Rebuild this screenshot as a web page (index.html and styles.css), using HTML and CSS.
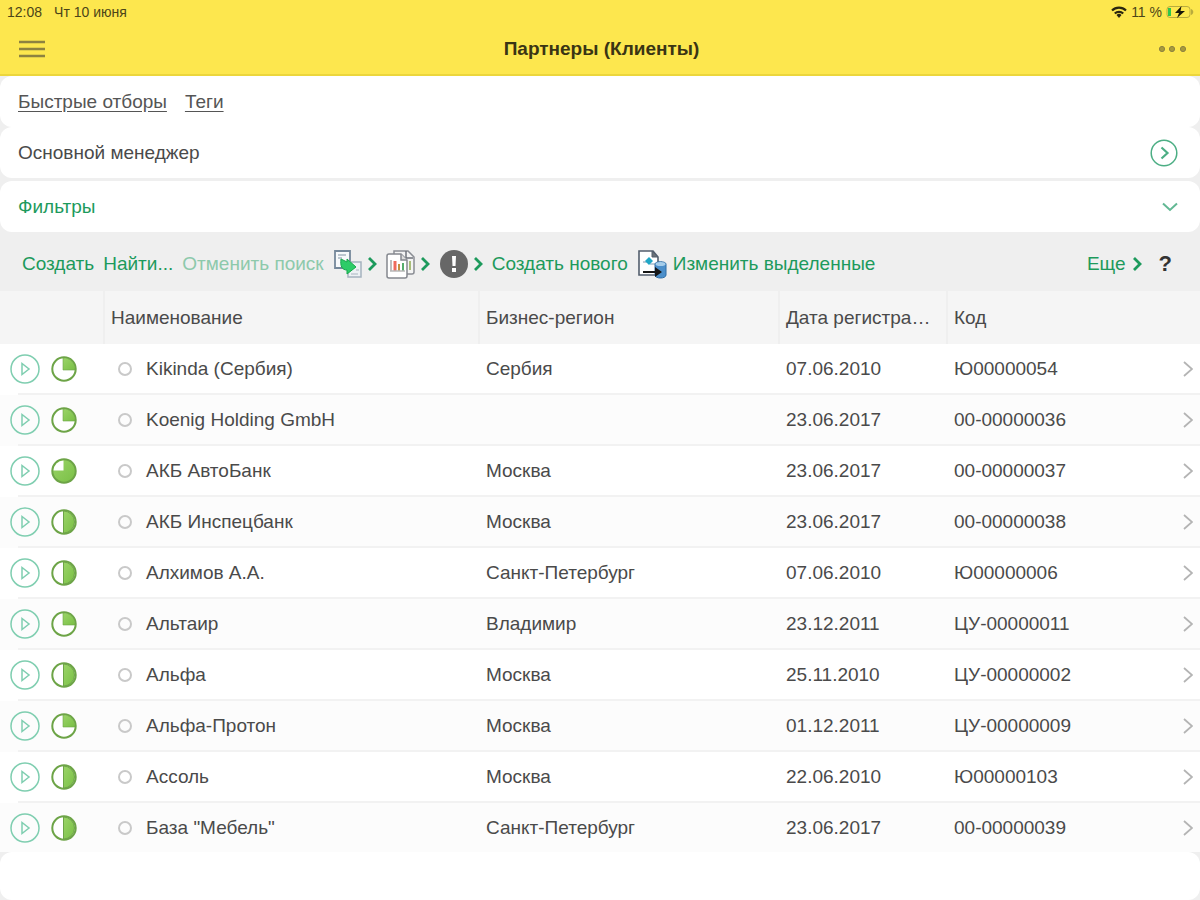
FILE: index.html
```html
<!DOCTYPE html>
<html lang="ru">
<head>
  <meta charset="UTF-8">
  <meta name="viewport" content="width=device-width, initial-scale=1.0">
  <title>Партнеры (Клиенты)</title>
  <link rel="stylesheet" href="styles.css">
</head>
<body>
  <svg class="sprite" aria-hidden="true">
    <symbol id="play" viewBox="0 0 30 30">
      <circle cx="15" cy="15" r="14" fill="none" stroke="#7fceb0" stroke-width="1.5"/>
      <path d="M12 9.5v11l7-5.5z" fill="none" stroke="#7fceb0" stroke-width="1.5"/>
    </symbol>
    <symbol id="pie25" viewBox="0 0 26 26">
      <circle cx="13" cy="13" r="11.7" fill="#fff" stroke="#6da447" stroke-width="2"/>
      <path d="M12 2a11 11 0 0 1 12 12H12z" fill="url(#green)" stroke="#6da447" stroke-width=".6"/>
    </symbol>
    <symbol id="pie50" viewBox="0 0 26 26">
      <circle cx="13" cy="13" r="11.7" fill="#fff" stroke="#6da447" stroke-width="2"/>
      <path d="M12.5 2a11 11 0 0 1 0 22z" fill="url(#green)" stroke="#6da447"/>
    </symbol>
    <symbol id="pie75" viewBox="0 0 26 26">
      <circle cx="13" cy="13" r="11.7" fill="url(#green)" stroke="#6da447" stroke-width="2"/>
      <path d="M12.5 2.5a10.5 10.5 0 0 0-10 10h10z" fill="#fff"/>
    </symbol>
    <symbol id="next" viewBox="0 0 10 16">
      <path d="M2 2l6 6-6 6" fill="none" stroke="currentColor" stroke-width="2.8"/>
    </symbol>
    <symbol id="go" viewBox="0 0 10 16">
      <path d="M1 1l8 7-8 7" fill="none" stroke="#b4b4b4" stroke-width="1.8"/>
    </symbol>
    <defs>
      <linearGradient id="green" x1="0" y1="0" x2="1" y2="1">
        <stop offset="0" stop-color="#9bd468"/>
        <stop offset="1" stop-color="#79bf45"/>
      </linearGradient>
    </defs>
  </svg>

  <header class="top">
    <div class="status">
      <span>12:08</span>
      <span class="date">Чт 10 июня</span>
      <svg class="wifi" width="16" height="12" viewBox="0 0 16 12">
        <path d="M1 4.5a10 10 0 0 1 14 0M3.8 7.5a6 6 0 0 1 8.4 0" fill="none" stroke="#29260f" stroke-width="2.2"/>
        <path d="M5.5 9a3.7 3.7 0 0 1 5 0L8 12z" fill="#29260f"/>
      </svg>
      <span class="percent">11 %</span>
      <svg width="28" height="14" viewBox="0 0 28 14">
        <rect x="1" y="1.5" width="23" height="11" rx="3" fill="none" stroke="#b9ab3d"/>
        <path d="M25 4c3 1 3 5 0 6z" fill="#b9ab3d"/>
        <rect x="2" y="3" width="3" height="8" fill="#2fc64b"/>
        <path d="M15.5 1L9 8h4l-2 5 8-7h-4.5z" fill="#17150a"/>
      </svg>
    </div>
    <div class="nav">
      <button class="icon-btn" aria-label="Меню">
        <svg width="26" height="18" viewBox="0 0 26 18">
          <path d="M0 2h26M0 9h26M0 16h26" stroke="#8d8240" stroke-width="2.5"/>
        </svg>
      </button>
      <h1>Партнеры (Клиенты)</h1>
      <button class="icon-btn" aria-label="Действия">
        <svg width="30" height="10" viewBox="0 0 30 10" fill="#a89a3a" stroke="#8d8240">
          <circle cx="4" cy="5" r="2.6"/><circle cx="14" cy="5" r="2.6"/><circle cx="25" cy="5" r="2.6"/>
        </svg>
      </button>
    </div>
  </header>

  <main>
    <nav class="card tabs">
      <a href="#quick">Быстрые отборы</a>
      <a href="#tags">Теги</a>
    </nav>
    <section class="card">
      <span>Основной менеджер</span>
      <button class="icon-btn" aria-label="Выбрать менеджера">
        <svg width="28" height="28" viewBox="0 0 28 28" fill="none" stroke="#4cae84">
          <circle cx="14" cy="14" r="12.8" stroke-width="1.5"/>
          <path d="M11.5 8.5l6 5.5-6 5.5" stroke-width="2.2"/>
        </svg>
      </button>
    </section>
    <section class="card filters">
      <button class="link">Фильтры</button>
      <svg width="16" height="10" viewBox="0 0 16 10">
        <path d="M1 1.5l7 6.5 7-6.5" fill="none" stroke="#62b894" stroke-width="2"/>
      </svg>
    </section>

    <div class="toolbar">
      <button class="link">Создать</button>
      <button class="link">Найти...</button>
      <button class="link" disabled>Отменить поиск</button>
      <button class="tool" aria-label="Создать на основании">
        <svg width="30" height="30" viewBox="0 0 30 30">
          <path d="M2 2h15v17H2z" fill="#f7f9fb" stroke="#75889b" stroke-width="1.8"/>
          <path d="M5 6h8M5 9h4" stroke="#a9b6c2" stroke-width="1.5"/>
          <path d="M15 13h13v15H15z" fill="#edf1f4" stroke="#a5b2be" stroke-width="1.5"/>
          <path d="M18 25h7M23 21h3" stroke="#c0c9d1" stroke-width="1.5"/>
          <path d="M8 10l6 3v-3l9 8-9 7v-4c-5 0-7-4-6-11z" fill="#2dcc68" stroke="#16a84c"/>
        </svg>
        <svg width="10" height="16"><use href="#next"/></svg>
      </button>
      <button class="tool" aria-label="Отчеты">
        <svg width="30" height="30" viewBox="0 0 30 30" stroke-width="1.5">
          <path d="M8 2h14l6 6v15a2 2 0 0 1-2 2H8z" fill="#f4f4f4" stroke="#8a8d94"/>
          <path d="M20 2v7h7" fill="none" stroke="#6f737b"/>
          <path d="M24 12v9" stroke="#a8bd79" stroke-width="2"/>
          <path d="M1 7a2 2 0 0 1 2-2h12l6 6v16a2 2 0 0 1-2 2H3a2 2 0 0 1-2-2z" fill="#fff" stroke="#85888f"/>
          <path d="M15 5v6h6" fill="#ddd" stroke="#85888f"/>
          <path d="M5 11v11" stroke="#aaa"/>
          <path d="M9 12v10" stroke="#ef6a5d" stroke-width="3"/>
          <path d="M13 15v7" stroke="#c38f41" stroke-width="2"/>
          <path d="M17 14v8" stroke="#55ad6c" stroke-width="2"/>
          <path d="M4 22h15" stroke="#b7b7b7"/>
        </svg>
        <svg width="10" height="16"><use href="#next"/></svg>
      </button>
      <button class="tool" aria-label="Важно">
        <svg width="30" height="30" viewBox="0 0 30 30">
          <circle cx="15" cy="15" r="14" fill="#676767"/>
          <path d="M13 7h4l-.5 10h-3zM13 19h4v4h-4z" fill="#fff"/>
        </svg>
        <svg width="10" height="16"><use href="#next"/></svg>
      </button>
      <button class="link">Создать нового</button>
      <button class="link edit">
        <svg width="30" height="30" viewBox="0 0 30 30">
          <path d="M2 2h14l5 6v18H2z" fill="#fff" stroke="#535e6d" stroke-width="1.6"/>
          <path d="M15 2v6h6z" fill="#6a7077" stroke="#535e6d"/>
          <path d="M6 13h4M13 15h5" stroke="#a8bccb" stroke-width="1.5"/>
          <path d="M12 8l4 4-4 4-4-4z" fill="#20a7c7"/>
          <path d="M18 15c0-3 11-3 11 0v11c0 4-11 4-11 0z" fill="#4c8fca" stroke="#2e6da6"/>
          <ellipse cx="23.5" cy="15" rx="5" ry="2" fill="#a6cdea"/>
          <path d="M6 22h12v-4l7 5-7 5v-4H6z" fill="#161616"/>
        </svg>
        Изменить выделенные
      </button>
      <button class="link more">Еще <svg width="10" height="16"><use href="#next"/></svg></button>
      <button class="help" aria-label="Справка">?</button>
    </div>

    <table>
      <thead>
        <tr>
          <th class="col-icons" aria-label="Состояние"></th>
          <th>Наименование</th>
          <th class="col-region">Бизнес-регион</th>
          <th class="col-date">Дата регистрации</th>
          <th class="col-code">Код</th>
        </tr>
      </thead>
      <tbody id="rows"></tbody>
    </table>
    <div class="bottom"></div>
  </main>

  <script src="script.js"></script>
</body>
</html>
```
FILE: styles.css
```css
* { box-sizing: border-box; }
body {
  margin: 0;
  min-height: 100vh;
  display: flex;
  flex-direction: column;
  background: #efefef;
  color: #4a4a4a;
  font-family: "Liberation Sans", Arial, sans-serif;
  font-size: 19px;
}
button {
  padding: 0;
  border: 0;
  background: none;
  font: inherit;
  color: inherit;
  cursor: pointer;
}
svg {
  display: block;
  flex: none;
}
.sprite {
  position: absolute;
  width: 0;
  height: 0;
}

/* header */
.top {
  background: #fde74e;
  border-bottom: 2px solid #ecd63c;
}
.status {
  display: flex;
  align-items: center;
  height: 24px;
  padding: 0 6px 0 7px;
  font-size: 14px;
  color: #4c4518;
}
.date { margin-left: 12px; }
.wifi { margin-left: auto; }
.percent { margin: 0 4px; }
.nav {
  display: flex;
  align-items: center;
  justify-content: space-between;
  height: 50px;
  padding: 0 12px 0 19px;
}
.nav h1 {
  margin: 0;
  font-size: 19px;
  color: #3a3514;
}

/* cards */
main {
  flex: 1;
  display: flex;
  flex-direction: column;
}
.card {
  display: flex;
  align-items: center;
  justify-content: space-between;
  height: 51px;
  padding: 0 22px 0 18px;
  background: #fff;
  border-radius: 12px;
}
.tabs {
  justify-content: flex-start;
  gap: 18px;
}
.tabs a {
  color: #555;
  text-underline-offset: 3px;
}
.filters { margin-top: 3px; }
.link {
  color: #1d9a5c;
  white-space: nowrap;
}
.link:disabled { color: #8dc9ab; }

/* toolbar */
.toolbar {
  display: flex;
  align-items: center;
  gap: 9px;
  height: 59px;
  padding: 4px 28px 0 22px;
}
.tool {
  display: flex;
  align-items: center;
  gap: 4px;
  color: #1d9a5c;
}
.edit, .more {
  display: flex;
  align-items: center;
  gap: 6px;
}
.more { margin-left: auto; }
.help {
  margin-left: 8px;
  font-size: 22px;
  font-weight: bold;
  color: #333;
}

/* list */
table {
  width: 100%;
  table-layout: fixed;
  border-collapse: separate;
  border-spacing: 0;
}
th {
  height: 53px;
  padding: 0 12px 0 6px;
  background: #f5f5f5;
  border-left: 2px solid #efefef;
  font-weight: normal;
  text-align: left;
  white-space: nowrap;
  overflow: hidden;
  text-overflow: ellipsis;
}
th:first-child { border-left: 0; }
.col-icons { width: 103px; }
.col-region { width: 25%; }
.col-date { width: 168px; }
.col-code { width: 254px; }
td {
  height: 51px;
  padding: 0 0 0 8px;
  border-bottom: 2px solid #f2f2f2;
}
/* the divider starts after the left inset */
td:first-child {
  padding-left: 10px;
  border-bottom-color: transparent;
  background: linear-gradient(#f2f2f2, #f2f2f2) 18px 100% / 100% 2px no-repeat border-box;
}
tbody { background: #fff; }
tbody tr:nth-child(even) { background: #fcfcfc; }
tbody tr:last-child td {
  height: 49px;
  border-bottom: 0;
  background: none;
}
.icons, .name, .code {
  display: flex;
  align-items: center;
}
.icons { gap: 11px; }
.name { gap: 14px; padding-left: 7px; }
.dot {
  width: 14px;
  height: 14px;
  border: 2px solid #c9c9c9;
  border-radius: 50%;
}
.code {
  justify-content: space-between;
  padding-right: 7px;
}
.bottom {
  flex: 1;
  background: #fff;
  border-radius: 12px;
}
```
FILE: script.js
```js
const partners = [
  [25, 'Kikinda (Сербия)', 'Сербия', '07.06.2010', 'Ю00000054'],
  [25, 'Koenig Holding GmbH', '', '23.06.2017', '00-00000036'],
  [75, 'АКБ АвтоБанк', 'Москва', '23.06.2017', '00-00000037'],
  [50, 'АКБ Инспецбанк', 'Москва', '23.06.2017', '00-00000038'],
  [50, 'Алхимов А.А.', 'Санкт-Петербург', '07.06.2010', 'Ю00000006'],
  [25, 'Альтаир', 'Владимир', '23.12.2011', 'ЦУ-00000011'],
  [50, 'Альфа', 'Москва', '25.11.2010', 'ЦУ-00000002'],
  [25, 'Альфа-Протон', 'Москва', '01.12.2011', 'ЦУ-00000009'],
  [50, 'Ассоль', 'Москва', '22.06.2010', 'Ю00000103'],
  [50, 'База "Мебель"', 'Санкт-Петербург', '23.06.2017', '00-00000039']
];

document.getElementById('rows').innerHTML = partners.map(([pie, name, region, date, code]) => `
  <tr>
    <td><div class="icons">
      <button aria-label="Открыть"><svg width="30" height="30"><use href="#play"/></svg></button>
      <svg width="26" height="26"><use href="#pie${pie}"/></svg>
    </div></td>
    <td><div class="name"><span class="dot"></span>${name}</div></td>
    <td>${region}</td>
    <td>${date}</td>
    <td><div class="code">${code}<svg width="10" height="16"><use href="#go"/></svg></div></td>
  </tr>`).join('');
```
